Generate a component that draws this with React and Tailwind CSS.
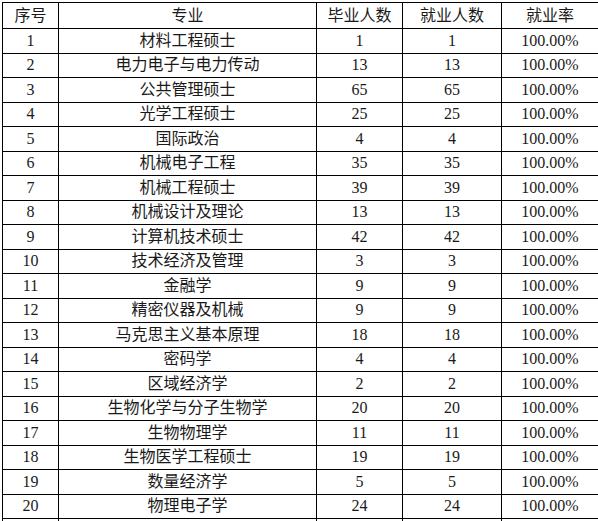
import React from "react";

const rows = [
	["1", "材料工程硕士", "1", "1"],
	["2", "电力电子与电力传动", "13", "13"],
	["3", "公共管理硕士", "65", "65"],
	["4", "光学工程硕士", "25", "25"],
	["5", "国际政治", "4", "4"],
	["6", "机械电子工程", "35", "35"],
	["7", "机械工程硕士", "39", "39"],
	["8", "机械设计及理论", "13", "13"],
	["9", "计算机技术硕士", "42", "42"],
	["10", "技术经济及管理", "3", "3"],
	["11", "金融学", "9", "9"],
	["12", "精密仪器及机械", "9", "9"],
	["13", "马克思主义基本原理", "18", "18"],
	["14", "密码学", "4", "4"],
	["15", "区域经济学", "2", "2"],
	["16", "生物化学与分子生物学", "20", "20"],
	["17", "生物物理学", "11", "11"],
	["18", "生物医学工程硕士", "19", "19"],
	["19", "数量经济学", "5", "5"],
	["20", "物理电子学", "24", "24"],
];

const cell = "border border-black p-0 text-center align-middle leading-none";

function App() {
	return (
		<div className="h-[521px] w-[598px] overflow-hidden bg-white">
			<table
				className="ml-[2px] mt-[2px] w-[596px] table-fixed border-collapse text-[16px] text-[#1a1a1a]"
				style={{ fontFamily: '"Liberation Serif", "Noto Sans CJK SC", serif' }}
			>
				<colgroup>
					<col className="w-[56px]" />
					<col className="w-[258px]" />
					<col className="w-[86px]" />
					<col className="w-[99px]" />
					<col className="w-[97px]" />
				</colgroup>
				<thead>
					<tr className="h-[26px]">
						<th className={cell + " font-normal"}>序号</th>
						<th className={cell + " font-normal"}>专业</th>
						<th className={cell + " font-normal"}>毕业人数</th>
						<th className={cell + " font-normal"}>就业人数</th>
						<th className={cell + " font-normal"}>就业率</th>
					</tr>
				</thead>
				<tbody>
					{rows.map((r) => (
						<tr key={r[0]} className="h-[24.5px]">
							<td className={cell}>{r[0]}</td>
							<td className={cell}>{r[1]}</td>
							<td className={cell}>{r[2]}</td>
							<td className={cell}>{r[3]}</td>
							<td className={cell}>100.00%</td>
						</tr>
					))}
					<tr className="h-[24.5px]">
						<td className={cell}></td>
						<td className={cell}></td>
						<td className={cell}></td>
						<td className={cell}></td>
						<td className={cell}></td>
					</tr>
				</tbody>
			</table>
		</div>
	);
}

export default App;
